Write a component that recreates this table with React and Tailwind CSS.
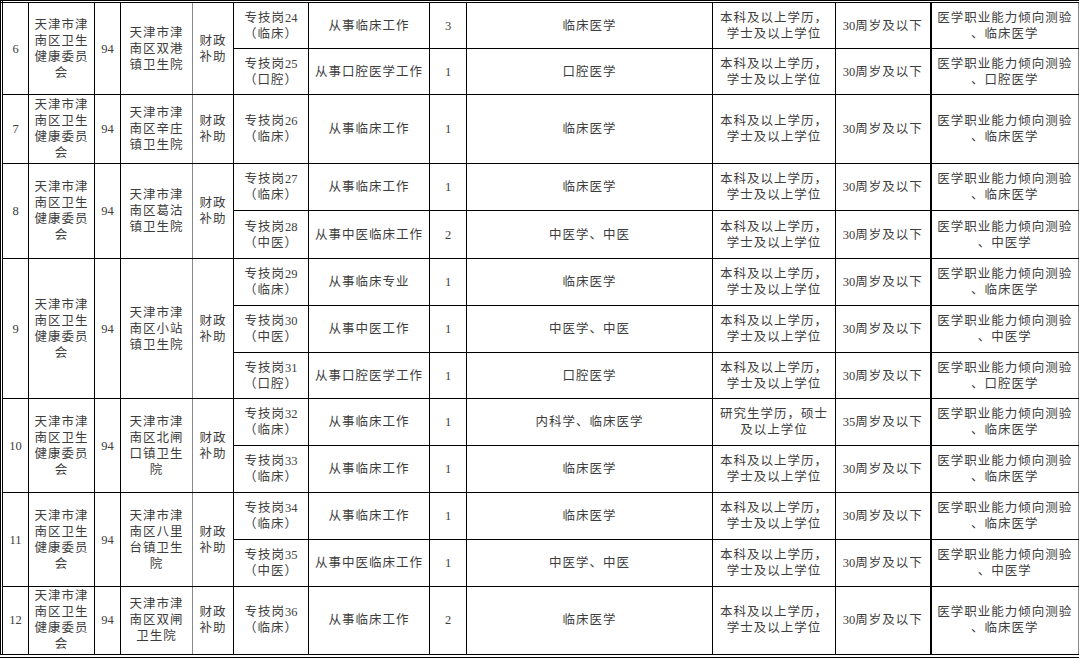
import React from "react";

const ff = { fontFamily: '"Liberation Serif", "Noto Sans CJK SC", serif' };

const groups = [
  {
    no: "6",
    org: ["天津市津", "南区卫生", "健康委员", "会"],
    unit: ["天津市津", "南区双港", "镇卫生院"],
    rows: [
      { h: "h-[47px]", post: "24", kind: "临床", duty: "从事临床工作", n: "3", major: "临床医学", edu: ["本科及以上学历，", "学士及以上学位"], age: "30周岁及以下", exam: "、临床医学" },
      { h: "h-[46px]", post: "25", kind: "口腔", duty: "从事口腔医学工作", n: "1", major: "口腔医学", edu: ["本科及以上学历，", "学士及以上学位"], age: "30周岁及以下", exam: "、口腔医学" },
    ],
  },
  {
    no: "7",
    org: ["天津市津", "南区卫生", "健康委员", "会"],
    unit: ["天津市津", "南区辛庄", "镇卫生院"],
    rows: [
      { h: "h-[69px]", post: "26", kind: "临床", duty: "从事临床工作", n: "1", major: "临床医学", edu: ["本科及以上学历，", "学士及以上学位"], age: "30周岁及以下", exam: "、临床医学" },
    ],
  },
  {
    no: "8",
    org: ["天津市津", "南区卫生", "健康委员", "会"],
    unit: ["天津市津", "南区葛沽", "镇卫生院"],
    rows: [
      { h: "h-[47px]", post: "27", kind: "临床", duty: "从事临床工作", n: "1", major: "临床医学", edu: ["本科及以上学历，", "学士及以上学位"], age: "30周岁及以下", exam: "、临床医学" },
      { h: "h-[48px]", post: "28", kind: "中医", duty: "从事中医临床工作", n: "2", major: "中医学、中医", edu: ["本科及以上学历，", "学士及以上学位"], age: "30周岁及以下", exam: "、中医学" },
    ],
  },
  {
    no: "9",
    org: ["天津市津", "南区卫生", "健康委员", "会"],
    unit: ["天津市津", "南区小站", "镇卫生院"],
    rows: [
      { h: "h-[47px]", post: "29", kind: "临床", duty: "从事临床专业", n: "1", major: "临床医学", edu: ["本科及以上学历，", "学士及以上学位"], age: "30周岁及以下", exam: "、临床医学" },
      { h: "h-[47px]", post: "30", kind: "中医", duty: "从事中医工作", n: "1", major: "中医学、中医", edu: ["本科及以上学历，", "学士及以上学位"], age: "30周岁及以下", exam: "、中医学" },
      { h: "h-[46px]", post: "31", kind: "口腔", duty: "从事口腔医学工作", n: "1", major: "口腔医学", edu: ["本科及以上学历，", "学士及以上学位"], age: "30周岁及以下", exam: "、口腔医学" },
    ],
  },
  {
    no: "10",
    org: ["天津市津", "南区卫生", "健康委员", "会"],
    unit: ["天津市津", "南区北闸", "口镇卫生", "院"],
    rows: [
      { h: "h-[47px]", post: "32", kind: "临床", duty: "从事临床工作", n: "1", major: "内科学、临床医学", edu: ["研究生学历，硕士", "及以上学位"], age: "35周岁及以下", exam: "、临床医学" },
      { h: "h-[47px]", post: "33", kind: "临床", duty: "从事临床工作", n: "1", major: "临床医学", edu: ["本科及以上学历，", "学士及以上学位"], age: "30周岁及以下", exam: "、临床医学" },
    ],
  },
  {
    no: "11",
    org: ["天津市津", "南区卫生", "健康委员", "会"],
    unit: ["天津市津", "南区八里", "台镇卫生", "院"],
    rows: [
      { h: "h-[47px]", post: "34", kind: "临床", duty: "从事临床工作", n: "1", major: "临床医学", edu: ["本科及以上学历，", "学士及以上学位"], age: "30周岁及以下", exam: "、临床医学" },
      { h: "h-[47px]", post: "35", kind: "中医", duty: "从事中医临床工作", n: "1", major: "中医学、中医", edu: ["本科及以上学历，", "学士及以上学位"], age: "30周岁及以下", exam: "、中医学" },
    ],
  },
  {
    no: "12",
    org: ["天津市津", "南区卫生", "健康委员", "会"],
    unit: ["天津市津", "南区双闸", "卫生院"],
    rows: [
      { h: "h-[69px]", post: "36", kind: "临床", duty: "从事临床工作", n: "2", major: "临床医学", edu: ["本科及以上学历，", "学士及以上学位"], age: "30周岁及以下", exam: "、临床医学" },
    ],
  },
];

const Lines = ({ lines }) => (
  <>
    {lines.map((l, i) => (
      <div key={i} className="whitespace-nowrap">{l}</div>
    ))}
  </>
);

const td = "border border-black p-0 text-center align-middle";

export default function App() {
  return (
    <div className="w-[1080px] h-[659px] bg-white overflow-hidden" style={ff}>
      <table className="table-fixed border-collapse w-[1077px] text-[12.5px] leading-[16px] tracking-[1px] text-[#3d3d3d] border-t-[3px] border-l-[3px] border-b-[4px] border-double border-black">
        <colgroup>
          <col className="w-[27px]" />
          <col className="w-[66px]" />
          <col className="w-[26px]" />
          <col className="w-[72px]" />
          <col className="w-[41px]" />
          <col className="w-[75px]" />
          <col className="w-[121px]" />
          <col className="w-[37px]" />
          <col className="w-[246px]" />
          <col className="w-[123px]" />
          <col className="w-[95px]" />
          <col className="w-[148px]" />
        </colgroup>
        <tbody>
          {groups.map((g) =>
            g.rows.map((r, i) => (
              <tr key={g.no + "-" + i} className={r.h}>
                {i === 0 && (
                  <>
                    <td rowSpan={g.rows.length} className={td + " border-l-2 tracking-normal"}>{g.no}</td>
                    <td rowSpan={g.rows.length} className={td}><Lines lines={g.org} /></td>
                    <td rowSpan={g.rows.length} className={td + " tracking-normal"}>94</td>
                    <td rowSpan={g.rows.length} className={td + " border-r-[#888]"}><Lines lines={g.unit} /></td>
                    <td rowSpan={g.rows.length} className={td}><Lines lines={["财政", "补助"]} /></td>
                  </>
                )}
                <td className={td}>
                  <div className="whitespace-nowrap">专技岗<span className="tracking-normal">{r.post}</span></div>
                  <div className="whitespace-nowrap">（{r.kind}）</div>
                </td>
                <td className={td + " whitespace-nowrap"}>{r.duty}</td>
                <td className={td + " tracking-normal border-l-[#666]"}>{r.n}</td>
                <td className={td + " whitespace-nowrap"}>{r.major}</td>
                <td className={td}><Lines lines={r.edu} /></td>
                <td className={td + " whitespace-nowrap"}><span className="tracking-normal">{r.age.slice(0, 2)}</span>{r.age.slice(2)}</td>
                <td className={td + " border-l-2 border-r-[#888]"}>
                  <div className="whitespace-nowrap">医学职业能力倾向测验</div>
                  <div className="whitespace-nowrap">{r.exam}</div>
                </td>
              </tr>
            ))
          )}
        </tbody>
      </table>
    </div>
  );
}
